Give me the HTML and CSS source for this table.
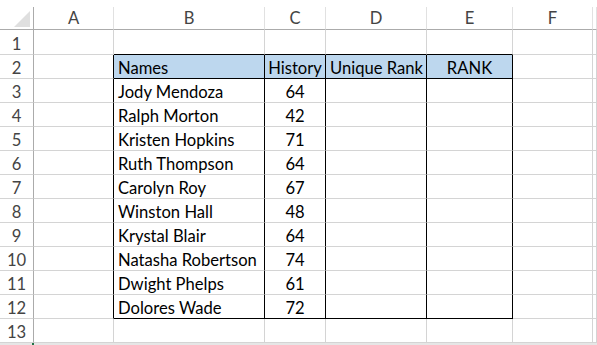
FILE: index.html
```html
<!DOCTYPE html>
<html>
<head>
<meta charset="utf-8">
<link rel="stylesheet" href="styles.css">
</head>
<body>
<div class="sheet">
  <div class="cell corner"><svg class="tri" width="18" height="16" viewBox="0 0 18 16"><polygon points="17,0 17,16 1,16" fill="#dfdfdf"/></svg></div>
  <div class="cell ch">A</div>
  <div class="cell ch">B</div>
  <div class="cell ch">C</div>
  <div class="cell ch">D</div>
  <div class="cell ch">E</div>
  <div class="cell ch">F</div>
  <div class="cell ch last-col"></div>

  <div class="cell rh first">1</div>
  <div class="cell first"></div>
  <div class="cell first above"></div>
  <div class="cell first above"></div>
  <div class="cell first above"></div>
  <div class="cell first above"></div>
  <div class="cell first"></div>
  <div class="cell first"></div>

  <div class="cell rh">2</div>
  <div class="cell edge"></div>
  <div class="cell tb hd left">Names</div>
  <div class="cell tb hd center">History</div>
  <div class="cell tb hd left">Unique Rank</div>
  <div class="cell tb hd center">RANK</div>
  <div class="cell"></div>
  <div class="cell"></div>

  <div class="cell rh">3</div><div class="cell edge"></div>
  <div class="cell tb left">Jody Mendoza</div><div class="cell tb center">64</div><div class="cell tb"></div><div class="cell tb"></div>
  <div class="cell"></div><div class="cell"></div>

  <div class="cell rh">4</div><div class="cell edge"></div>
  <div class="cell tb left">Ralph Morton</div><div class="cell tb center">42</div><div class="cell tb"></div><div class="cell tb"></div>
  <div class="cell"></div><div class="cell"></div>

  <div class="cell rh">5</div><div class="cell edge"></div>
  <div class="cell tb left">Kristen Hopkins</div><div class="cell tb center">71</div><div class="cell tb"></div><div class="cell tb"></div>
  <div class="cell"></div><div class="cell"></div>

  <div class="cell rh">6</div><div class="cell edge"></div>
  <div class="cell tb left">Ruth Thompson</div><div class="cell tb center">64</div><div class="cell tb"></div><div class="cell tb"></div>
  <div class="cell"></div><div class="cell"></div>

  <div class="cell rh">7</div><div class="cell edge"></div>
  <div class="cell tb left">Carolyn Roy</div><div class="cell tb center">67</div><div class="cell tb"></div><div class="cell tb"></div>
  <div class="cell"></div><div class="cell"></div>

  <div class="cell rh">8</div><div class="cell edge"></div>
  <div class="cell tb left">Winston Hall</div><div class="cell tb center">48</div><div class="cell tb"></div><div class="cell tb"></div>
  <div class="cell"></div><div class="cell"></div>

  <div class="cell rh">9</div><div class="cell edge"></div>
  <div class="cell tb left">Krystal Blair</div><div class="cell tb center">64</div><div class="cell tb"></div><div class="cell tb"></div>
  <div class="cell"></div><div class="cell"></div>

  <div class="cell rh">10</div><div class="cell edge"></div>
  <div class="cell tb left">Natasha Robertson</div><div class="cell tb center">74</div><div class="cell tb"></div><div class="cell tb"></div>
  <div class="cell"></div><div class="cell"></div>

  <div class="cell rh">11</div><div class="cell edge"></div>
  <div class="cell tb left">Dwight Phelps</div><div class="cell tb center">61</div><div class="cell tb"></div><div class="cell tb"></div>
  <div class="cell"></div><div class="cell"></div>

  <div class="cell rh">12</div><div class="cell edge"></div>
  <div class="cell tb bot left">Dolores Wade</div><div class="cell tb bot center">72</div><div class="cell tb bot"></div><div class="cell tb bot"></div>
  <div class="cell"></div><div class="cell"></div>

  <div class="cell rh">13</div><div class="cell"></div>
  <div class="cell"></div><div class="cell"></div><div class="cell"></div><div class="cell"></div>
  <div class="cell"></div><div class="cell"></div>
</div>
<div class="footer"><span class="mark"></span></div>
</body>
</html>
```

FILE: styles.css
```css
html, body {
  margin: 0;
  padding: 0;
  background: #ffffff;
  overflow: hidden;
}

.sheet {
  display: grid;
  grid-template-columns: 34px 80px 151px 61px 101px 86px 80px 1fr;
  grid-auto-rows: 24px;
  grid-template-rows: 23px 25px;
  padding-top: 7px;
  font-family: "Lato", "Open Sans", sans-serif;
  font-size: 16.6px;
  color: #000;
}

.cell {
  box-sizing: border-box;
  border-right: 1px solid #d4d4d4;
  border-bottom: 1px solid #d4d4d4;
  display: flex;
  align-items: flex-end;
  padding-bottom: 0;
  line-height: 19px;
  white-space: nowrap;
  overflow: hidden;
}

.corner {
  border-right: 1px solid #ababab;
  border-bottom: 1px solid #ababab;
  position: relative;
}

.tri {
  position: absolute;
  right: 2px;
  bottom: 2px;
}

.ch {
  justify-content: center;
  color: #444;
  border-right-color: #e1e1e1;
  border-bottom: 1px solid #ababab;
  padding-bottom: 1px;
}

.rh {
  justify-content: center;
  color: #444;
  border-right: 1px solid #ababab;
}

.edge {
  border-right-color: #000;
}

.above {
  border-bottom-color: #000;
}

.tb {
  border-right-color: #000;
}

.hd {
  background: #bdd7ee;
  border-bottom-color: #000;
}

.bot {
  border-bottom-color: #000;
}

.left {
  justify-content: flex-start;
  padding-left: 4px;
}

.center {
  justify-content: center;
}

.footer {
  position: absolute;
  left: 0;
  right: 0;
  top: 343px;
  height: 2px;
  background: #e6e6e6;
}

.mark {
  position: absolute;
  left: 32px;
  top: 0;
  width: 2px;
  height: 2px;
  background: #217346;
}
```
